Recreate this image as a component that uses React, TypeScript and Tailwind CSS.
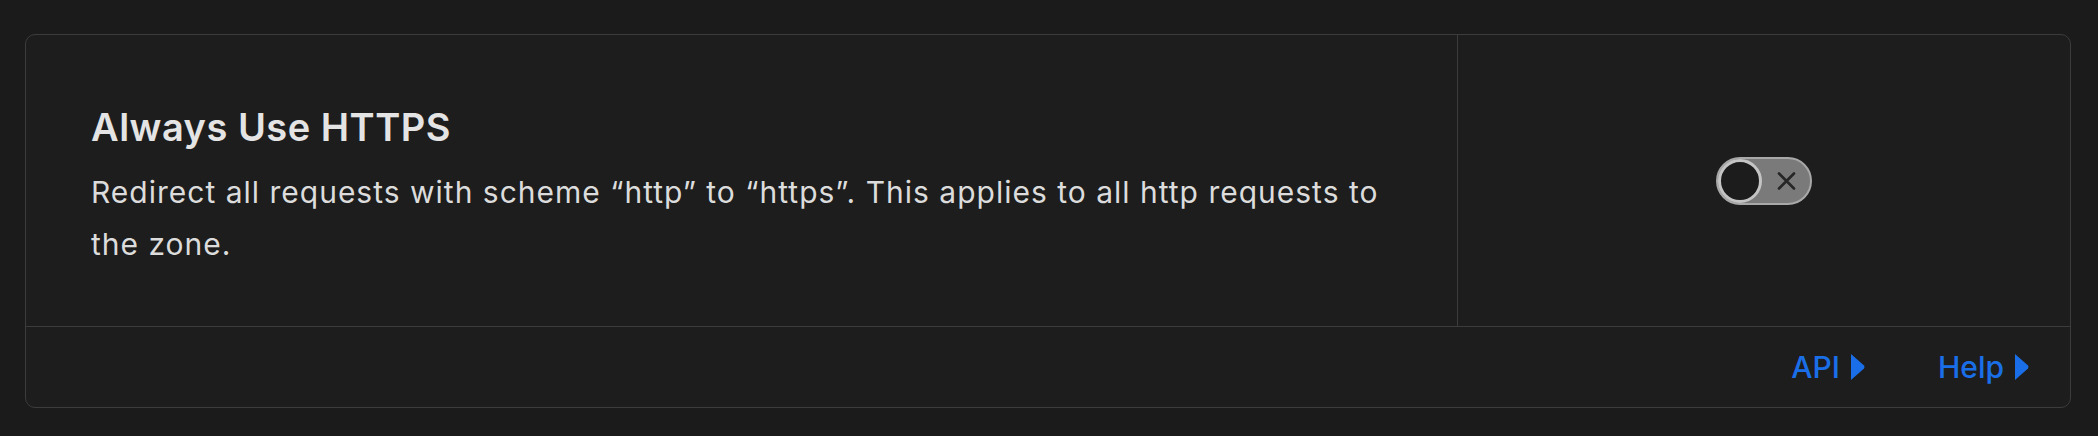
import React from "react";

const font = { fontFamily: "Inter, 'Noto Sans', sans-serif" };

function Caret() {
  return (
    <svg width="14" height="26" viewBox="0 0 14 26" className="shrink-0">
      <path d="M0 0 L13 11.5 Q14 13 13 14.5 L0 26 Z" fill="#1a6fe8" />
    </svg>
  );
}

function Toggle() {
  return (
    <div className="flex h-[48px] w-[96px] items-center rounded-full border-2 border-[#a8a8a8] bg-[#7a7a7a]">
      <div className="h-[44px] w-[44px] shrink-0 rounded-full border-[3px] border-[#c4c4c4] bg-[#1c1c1c]" />
      <div className="flex flex-1 items-center justify-center">
        <svg width="19" height="18" viewBox="0 0 19 18">
          <path d="M2 1.5 L17 16.5 M17 1.5 L2 16.5" stroke="#262626" strokeWidth="2.6" strokeLinecap="round" />
        </svg>
      </div>
    </div>
  );
}

export default function App() {
  return (
    <div className="min-h-[436px] bg-[#1b1b1b] pl-[25px] pr-[27px] pt-[34px]" style={font}>
      <div className="rounded-[10px] border border-[#3c3c3c] bg-[#1d1d1d]">
        {/* setting row */}
        <div className="flex h-[292px] border-b border-[#3c3c3c]">
          <div className="flex w-[1432px] shrink-0 flex-col border-r border-[#3c3c3c] pl-[65px] pr-[60px] pt-[70px]">
            <h2 className="text-[38px] font-semibold leading-[44px] tracking-[0.5px] text-[#e4e4e4]">
              Always Use HTTPS
            </h2>
            <p className="mt-[17px] text-[30px] leading-[52px] tracking-[1px] text-[#dcdcdc]">
              Redirect all requests with scheme “http” to “https”. This applies to all http requests to the zone.
            </p>
          </div>
          <div className="flex flex-1 items-center justify-center">
            <Toggle />
          </div>
        </div>

        {/* footer links */}
        <div className="flex h-[80px] items-center justify-end gap-[73px] pr-[41px]">
          <a className="flex items-center gap-[11px] text-[30px] font-medium text-[#1a6fe8]">
            API <Caret />
          </a>
          <a className="flex items-center gap-[11px] text-[30px] font-medium text-[#1a6fe8]">
            Help <Caret />
          </a>
        </div>
      </div>
    </div>
  );
}
